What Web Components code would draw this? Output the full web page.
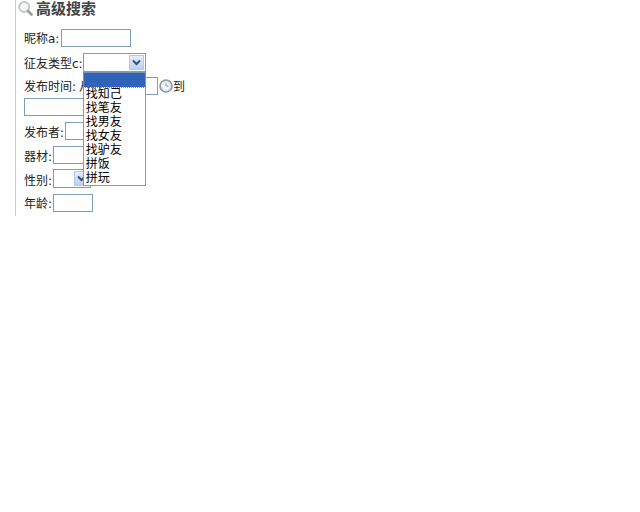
<!DOCTYPE html>
<html>
<head>
<meta charset="utf-8">
<title>高级搜索</title>
<style>
  html, body { margin: 0; padding: 0; background: #fff; }
  body { font: 12px/14px "DejaVu Sans", "Noto Sans CJK SC", sans-serif; color: #222; }
</style>
</head>
<body>
<search-panel heading="高级搜索">
  <form-row label="昵称a:" style="--gap:2px"><text-box width="70"></text-box></form-row>
  <form-row label="征友类型c:" style="--gap:0px;--lift:-4px">
    <select-box width="63" style="margin-bottom:-1px">
      <drop-list>
        <span class="sel"></span>
        <span>找知己</span><span>找笔友</span><span>找男友</span><span>找女友</span><span>找驴友</span><span>拼饭</span><span>拼玩</span>
      </drop-list>
    </select-box>
  </form-row>
  <form-row label="发布时间:" style="--gap:3px">
    <span>从</span>
    <text-box width="67"></text-box>
    <clock-icon></clock-icon><span>到</span>
    <text-box width="74"></text-box>
  </form-row>
  <form-row label="发布者:" style="--lift:-4px"><text-box width="70"></text-box></form-row>
  <form-row label="器材:" style="--lift:-4px"><text-box width="40"></text-box></form-row>
  <form-row label="性别:" style="margin-top:-1px;--lift:-4px"><select-box width="38"></select-box></form-row>
  <form-row label="年龄:"><text-box width="40"></text-box></form-row>
</search-panel>

<script>
class SearchPanel extends HTMLElement {
  constructor() {
    super();
    this.attachShadow({ mode: 'open' });
    this.shadowRoot.innerHTML = `
      <style>
        :host { display: block; width: 300px; margin-left: 15px; border-left: 1px solid #c8c8c8; height: 216px; box-sizing: border-box; }
        h2 { display: flex; align-items: center; gap: 3px; margin: 0; padding: 0 0 0 2px; height: 16px; font: bold 15px/16px "Noto Sans CJK SC", sans-serif; color: #444; }
        svg { flex: none; }
        .rows { display: flex; flex-direction: column; gap: 6px; padding: 13px 0 0 8px; }
      </style>
      <h2>
        <svg width="15" height="16" viewBox="0 0 15 16">
          <circle cx="6.2" cy="7" r="5" fill="#f4f7f8" stroke="#c2c6c6" stroke-width="2"/>
          <path d="M10 11 L13.5 14.5" stroke="#9c9c9c" stroke-width="2.6" stroke-linecap="round"/>
        </svg>
        <span>${this.getAttribute('heading')}</span>
      </h2>
      <div class="rows"><slot></slot></div>`;
  }
}

class FormRow extends HTMLElement {
  constructor() {
    super();
    this.attachShadow({ mode: 'open' });
    this.shadowRoot.innerHTML = `
      <style>
        :host { display: flex; flex-wrap: wrap; align-items: center; row-gap: 3px; width: 170px; min-height: 18px; }
        /* --lift nudges the text a pixel up or down inside its row */
        label { white-space: nowrap; margin-right: var(--gap, 1px); margin-bottom: var(--lift, -2px); }
        ::slotted(span) { margin-bottom: var(--lift, -2px); }
      </style>
      <label>${this.getAttribute('label')}</label><slot></slot>`;
  }
}

class TextBox extends HTMLElement {
  constructor() {
    super();
    this.attachShadow({ mode: 'open' });
    const w = this.getAttribute('width');
    this.shadowRoot.innerHTML = `
      <style>
        :host { display: block; width: ${w}px; height: 18px; box-sizing: border-box; border: 1px solid #7f9db9; background: #fff; }
      </style>`;
  }
}

class SelectBox extends HTMLElement {
  constructor() {
    super();
    this.attachShadow({ mode: 'open' });
    const w = this.getAttribute('width');
    this.shadowRoot.innerHTML = `
      <style>
        :host { display: block; position: relative; width: ${w}px; height: 19px; box-sizing: border-box; border: 1px solid #7f9db9; background: #fff; }
        .btn { position: absolute; right: 1px; top: 1px; width: 15px; height: 15px; box-sizing: border-box; border: 1px solid #b4c8e6; background: linear-gradient(#e4edfb, #bcd0f2); display: flex; align-items: center; justify-content: center; }
      </style>
      <div class="btn">
        <svg width="9" height="7" viewBox="0 0 9 7"><path d="M1 1.5 L4.5 5 L8 1.5" fill="none" stroke="#39507c" stroke-width="2"/></svg>
      </div>
      <slot></slot>`;
  }
}

// the list sits over the rows below it
class DropList extends HTMLElement {
  constructor() {
    super();
    this.attachShadow({ mode: 'open' });
    this.shadowRoot.innerHTML = `
      <style>
        :host { position: absolute; left: -1px; top: 18px; width: 63px; height: 114px; box-sizing: border-box; border: 1px solid #7f9db9; background: #fff; z-index: 2; display: flex; flex-direction: column; font: 12px/14px "Noto Sans CJK SC", sans-serif; color: #000; }
        ::slotted(span) { display: block; flex: none; height: 14px; padding-left: 2px; white-space: nowrap; }
        ::slotted(.sel) { background: #2f62b8; outline: 1px dotted #888; margin-bottom: -1px; }
      </style>
      <slot></slot>`;
  }
}

class ClockIcon extends HTMLElement {
  constructor() {
    super();
    this.attachShadow({ mode: 'open' });
    this.shadowRoot.innerHTML = `
      <style>:host { display: block; width: 14px; height: 14px; margin-left: 1px; }</style>
      <svg width="14" height="14" viewBox="0 0 14 14">
        <circle cx="7" cy="7" r="6" fill="#dfe7f4" stroke="#94979c" stroke-width="1.6"/>
        <circle cx="7" cy="7" r="3.6" fill="#f7f9fc"/>
        <path d="M7 4 V7 H9.5" fill="none" stroke="#7d92b8" stroke-width="1"/>
      </svg>`;
  }
}

customElements.define('search-panel', SearchPanel);
customElements.define('form-row', FormRow);
customElements.define('text-box', TextBox);
customElements.define('select-box', SelectBox);
customElements.define('drop-list', DropList);
customElements.define('clock-icon', ClockIcon);
</script>
</body>
</html>
